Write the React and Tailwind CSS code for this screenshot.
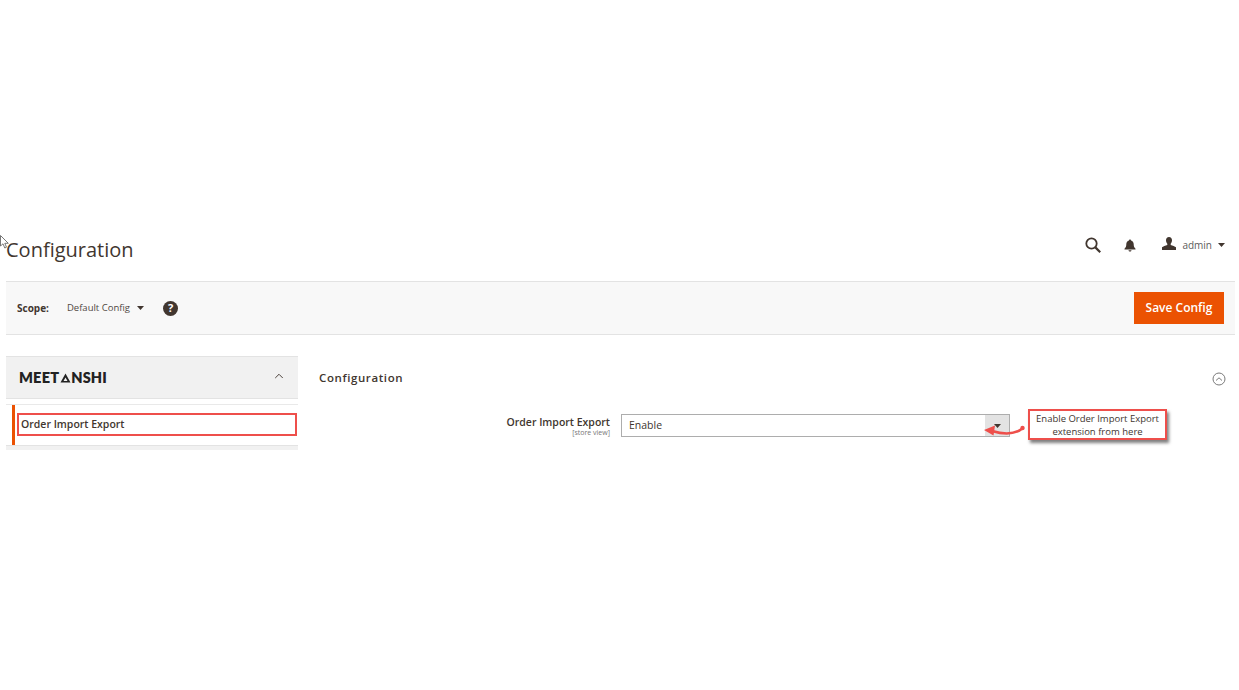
import React from 'react';
import { ChevronUp } from 'lucide-react';

const Caret = ({ className = '' }) => (
  <svg width="7" height="4" viewBox="0 0 7 4" className={className}>
    <path d="M0 0h7L3.5 4z" fill="#41362f" />
  </svg>
);

const Header = () => (
  <div className="flex h-[44px] items-center justify-between">
    <h1 className="text-[20px] leading-[28px] mt-[4px] text-[#41362f]">Configuration</h1>
    <div className="flex items-center mb-[7px] mr-[10px]">
      {/* Search */}
      <svg width="16" height="16" viewBox="0 0 16 16" fill="none" stroke="#41362f" strokeWidth="1.8">
        <circle cx="6.5" cy="6.5" r="5.2" />
        <path d="M10.4 10.4L15.2 15.2" strokeWidth="2.2" />
      </svg>
      {/* Bell */}
      <svg width="12" height="13" viewBox="0 0 12 13" className="ml-[23px] mt-[2px]">
        <path d="M6 0.5c.7 0 1 .5 1 1 1.8.5 2.7 2 2.7 3.8 0 2.2.6 3.4 1.8 4.4v.8H.5v-.8c1.2-1 1.8-2.2 1.8-4.4C2.300 3.500 3.200 2 5 1.500c0-.5.300-1 1-1z" fill="#41362f" />
        <path d="M4.500 11.300h3c0 .8-.7 1.300-1.500 1.300s-1.500-.5-1.500-1.300z" fill="#41362f" />
      </svg>
      {/* User */}
      <svg width="14" height="13" viewBox="0 0 14 13" className="ml-[26px] mb-[2px]">
        <path d="M7 0c1.900 0 3 1.300 3 3.300 0 1.400-.6 2.700-1.300 3.400v1.200c1.800.6 4.300 1.300 5.300 2.400V13H0v-2.700c1-1.100 3.500-1.800 5.300-2.400V6.700C4.600 6 4 4.700 4 3.300 4 1.300 5.100 0 7 0z" fill="#41362f" />
      </svg>
      <span className="ml-[6px] text-[10px] text-[#5c5c5c] leading-none">admin</span>
      <Caret className="ml-[6px]" />
    </div>
  </div>
);

const ScopeBar = () => (
  <div className="flex h-[54px] items-center justify-between border-y border-[#e3e3e3] bg-[#f8f8f8] pl-[11px] pr-[11px]">
    <div className="flex items-center">
      <span className="text-[10px] font-bold text-[#41362f]">Scope:</span>
      <span className="ml-[18px] text-[9.5px] text-[#514943]">Default Config</span>
      <Caret className="ml-[7px]" />
      <span className="ml-[19px] flex h-[15px] w-[15px] items-center justify-center rounded-full bg-[#41362f] text-[11px] font-bold text-white">?</span>
    </div>
    <button className="h-[32px] w-[90px] bg-[#eb5202] text-[12px] font-semibold text-white">Save Config</button>
  </div>
);

const Sidebar = () => (
  <div className="w-[292px] shrink-0">
    <div className="flex h-[43px] items-center justify-between border-y border-[#e3e3e3] bg-[#f1f1f1] pl-[13px] pr-[12px]">
      <span className="flex items-center text-[14.500px] font-extrabold text-[#222] font-['Lato',sans-serif] tracking-[0.2px]">
        MEET
        <svg width="11" height="10" viewBox="0 0 11 10" className="mx-[0.500px]">
          <path d="M5.500 0.500L10.500 9.500H0.500zM5.500 4.500L3.500 8H7.500z" fill="#222" fillRule="evenodd" />
        </svg>
        NSHI
      </span>
      <ChevronUp size={14} strokeWidth={1.6} className="mb-[3px] text-[#41362f]" />
    </div>
    <div className="mt-[5px] border-t border-[#e9e9e9] pl-[6px]">
      <div className="border-l-[3px] border-[#eb5202] pl-[2px] pt-[8px] pb-[9px] pr-[1px]">
        <div className="flex h-[23px] items-center border-2 border-[#ee4f4b] pl-[2px] text-[10.500px] font-semibold text-[#41362f]">
          Order Import Export
        </div>
      </div>
    </div>
    <div className="h-[5px] border-t border-[#e3e3e3] bg-[#f1f1f1]" />
  </div>
);

const ConfigPanel = () => (
  <div className="flex-1 pl-[21px] pr-[9px]">
    <div className="flex h-[44px] items-center justify-between">
      <h2 className="mt-[-1px] text-[11.500px] font-semibold tracking-[0.6px] text-[#41362f]">Configuration</h2>
      <svg width="14" height="14" viewBox="0 0 14 14" fill="none" className="mt-[1px]">
        <circle cx="7" cy="7" r="6" stroke="#7a7a7a" />
        <path d="M4 8.500L7 5.800L10 8.500" stroke="#7a7a7a" />
      </svg>
    </div>
    <div className="mt-[14px] flex items-start">
      <div className="w-[291px] pt-[1px] text-right">
        <div className="text-[10.500px] font-semibold leading-[14px] text-[#41362f]">Order Import Export</div>
        <div className="text-[7px] leading-[8px] text-[#777]">[store view]</div>
      </div>
      <div className="ml-[11px] flex h-[23px] w-[389px] items-center justify-between border border-[#adadad] bg-white">
        <span className="pl-[7px] text-[10.500px] text-[#41362f]">Enable</span>
        <span className="flex h-full w-[24px] items-center justify-center bg-[#e3e3e3]">
          <Caret />
        </span>
      </div>
    </div>
  </div>
);

export default function App() {
  return (
    <div className="relative h-[690px] w-[1239px] overflow-hidden bg-white font-['Open_Sans',sans-serif]">
      {/* Mouse cursor */}
      <svg width="9" height="14" viewBox="0 0 9 14" className="absolute left-0 top-[235px]">
        <path d="M0.500 0.500V11L3 8.800L4.800 13L6.500 12.200L4.800 8.300H8.300z" fill="#fff" stroke="#555" strokeWidth="0.800" />
      </svg>

      <div className="pl-[6px] pr-[4px] pt-[226px]">
        <Header />
        <div className="mt-[11px]"><ScopeBar /></div>
        <div className="mt-[21px] flex">
          <Sidebar />
          <ConfigPanel />
        </div>
      </div>

      {/* Annotation arrow */}
      <svg width="44" height="16" viewBox="0 0 44 16" className="absolute left-[983px] top-[422px]">
        <path d="M40 6C33 12 22 13 9 9" fill="none" stroke="#ee4f4b" strokeWidth="2.500" strokeLinecap="round" />
        <circle cx="39.500" cy="6" r="2.200" fill="#ee4f4b" />
        <path d="M1 8L12 3.500L10.500 13.500z" fill="#ee4f4b" />
      </svg>

      {/* Annotation callout */}
      <div className="absolute left-[1028px] top-[409px] flex h-[31px] w-[139px] flex-col items-center justify-center border-2 border-[#ee4f4b] bg-white text-[9.500px] leading-[13px] text-[#41362f] shadow-[2px_3px_3px_rgba(0,0,0,0.5)]">
        <span>Enable Order Import Export</span>
        <span>extension from here</span>
      </div>
    </div>
  );
}
